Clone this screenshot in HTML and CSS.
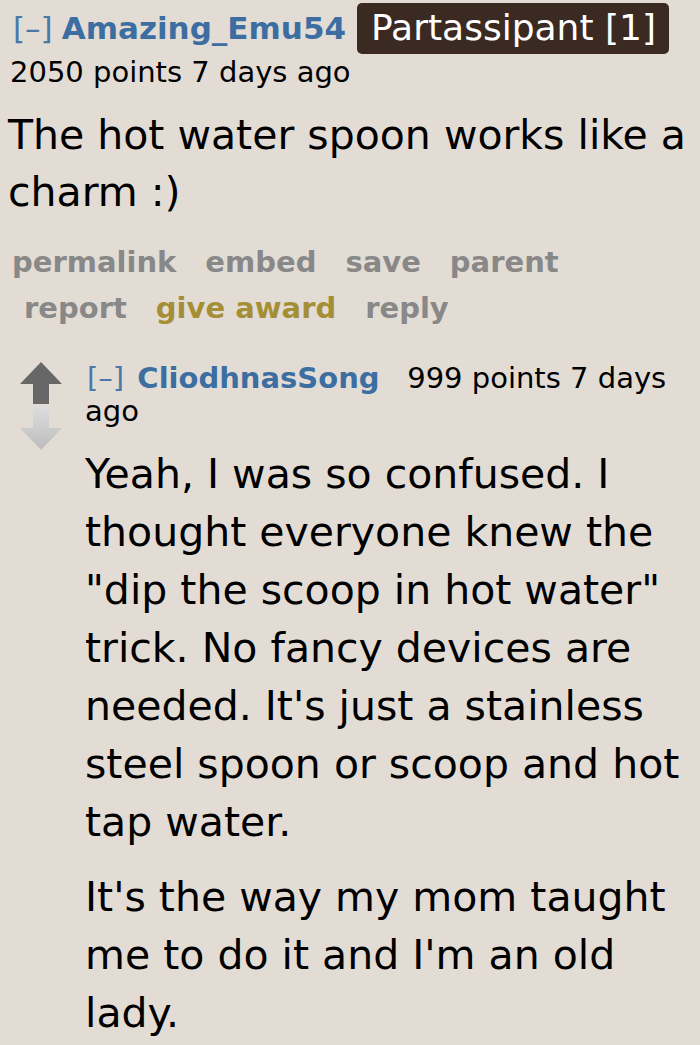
FILE: index.html
```html
<!DOCTYPE html>
<html>
<head>
<meta charset="utf-8">
<link rel="stylesheet" href="styles.css">
</head>
<body>
<div class="page">
  <div class="comment">
    <div class="tagline">
      <span class="expand">[–]</span>
      <span class="author">Amazing_Emu54</span>
      <span class="flair">Partassipant [1]</span>
    </div>
    <div class="meta">2050 points 7 days ago</div>
    <div class="body"><p>The hot water spoon works like a charm :)</p></div>
    <ul class="buttons">
      <li>permalink</li>
      <li>embed</li>
      <li>save</li>
      <li>parent</li>
      <li class="indent">report</li>
      <li class="award">give award</li>
      <li>reply</li>
    </ul>
  </div>
  <div class="child">
    <div class="votes">
      <svg class="up" width="42" height="42" viewBox="0 0 42 42"><path d="M21 0 L42 22 L29 22 L29 42 L13 42 L13 22 L0 22 Z" fill="#676767"/></svg>
      <svg class="down" width="42" height="47" viewBox="0 0 42 47"><defs><linearGradient id="g" x1="0" y1="0" x2="0" y2="1"><stop offset="0" stop-color="#dedede"/><stop offset="1" stop-color="#bcbcbc"/></linearGradient></defs><path d="M13 1 L29 1 L29 24 L42 24 L21 46 L0 24 L13 24 Z" fill="url(#g)"/></svg>
    </div>
    <div class="entry">
      <div class="tagline2"><span class="expand">[–]</span> <span class="author">CliodhnasSong</span>&nbsp;&nbsp; <span class="meta2">999 points 7 days ago</span></div>
      <div class="body body2">
        <p>Yeah, I was so confused. I thought everyone knew the "dip the scoop in hot water" trick. No fancy devices are needed. It's just a stainless steel spoon or scoop and hot tap water.</p>
        <p>It's the way my mom taught me to do it and I'm an old lady.</p>
      </div>
    </div>
  </div>
</div>
</body>
</html>
```

FILE: styles.css
```css
html, body {
  margin: 0;
  padding: 0;
  background: #e2dcd5;
}
body {
  font-family: "DejaVu Sans", Verdana, sans-serif;
  color: #000;
  width: 700px;
  height: 1045px;
  overflow: hidden;
}
.page {
  padding: 0 0 0 10px;
}
.tagline {
  display: flex;
  align-items: center;
  height: 56px;
  font-size: 31px;
}
.expand {
  color: #4a79a8;
  font-weight: normal;
  margin-left: 3px;
}
.author {
  color: #3d6ea2;
  font-weight: bold;
  margin-left: 9px;
}
.flair {
  background: #3b2a22;
  color: #fff;
  font-size: 36px;
  line-height: 42px;
  border-radius: 5px;
  padding: 4px 13px 5px 14px;
  margin-left: 11px;
  margin-top: 0;
}
.meta {
  font-size: 29px;
  line-height: 32px;
  margin-top: 0;
}
.body p {
  margin: 0;
}
.body {
  font-size: 41px;
  line-height: 57px;
  margin-top: 19px;
  margin-left: -2px;
}
.buttons {
  list-style: none;
  margin: 18px 0 0 0;
  padding: 0 80px 0 2px;
  display: flex;
  flex-wrap: wrap;
  column-gap: 29px;
  font-size: 29px;
  line-height: 46px;
  font-weight: bold;
  color: #888888;
}
.buttons .indent {
  margin-left: 12px;
}
.buttons .award {
  color: #a58f36;
}
.child {
  display: flex;
  margin-top: 31px;
}
.votes {
  display: flex;
  flex-direction: column;
  width: 42px;
  margin-left: 10px;
  padding-top: 0;
}
.votes svg {
  display: block;
}
.entry {
  margin-left: 23px;
  flex: 1;
}
.tagline2 {
  font-size: 29px;
  line-height: 33px;
  padding-right: 8px;
}
.tagline2 .expand {
  margin-left: 2px;
}
.tagline2 .author {
  margin-left: 4px;
}
.meta2 {
  font-size: 29px;
}
.body2 {
  font-size: 41px;
  line-height: 58px;
  margin-top: 17px;
  margin-left: 0;
  padding-right: 8px;
}
.body2 p {
  margin-bottom: 17px;
}
```
